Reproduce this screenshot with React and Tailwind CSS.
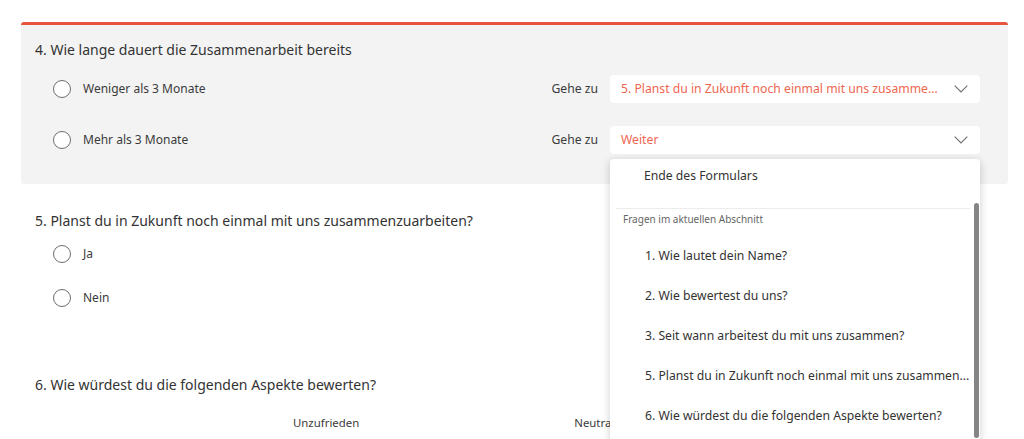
import React from "react";

const Chevron = () => (
  <svg width="14" height="8" viewBox="0 0 14 8" fill="none" className="shrink-0">
    <polyline points="0.7,0.7 7,7 13.3,0.7" stroke="#707070" strokeWidth="1.1" fill="none" />
  </svg>
);

const Radio = ({ label }) => (
  <div className="flex items-center">
    <div className="w-[18px] h-[18px] rounded-full border border-[#6e6e6e] bg-white ml-[18px]" />
    <span className="ml-[12px] text-[12px] text-[#3b3b3b]">{label}</span>
  </div>
);

const Select = ({ value }) => (
  <div className="flex items-center justify-between w-[370px] h-[28px] bg-white rounded-[4px] pl-[11px] pr-[12px]">
    <span className="text-[12.2px] text-[#ee6650] whitespace-nowrap mr-[14px]">{value}</span>
    <Chevron />
  </div>
);

const menuItems = [
  "1. Wie lautet dein Name?",
  "2. Wie bewertest du uns?",
  "3. Seit wann arbeitest du mit uns zusammen?",
  "5. Planst du in Zukunft noch einmal mit uns zusammen...",
  "6. Wie würdest du die folgenden Aspekte bewerten?",
];

export default function App() {
  return (
    <div
      className="w-[1024px] h-[439px] overflow-hidden bg-white relative"
      style={{ fontFamily: '"Noto Sans", "Open Sans", sans-serif' }}
    >
      <div className="pt-[22px] pl-[21px]">
        <div className="w-[987px] bg-[#f3f3f3] border-t-[3px] border-[#e8553e] rounded-[3px] pl-[14px] pr-[28px] pt-[14px] pb-[30px]">
          <div className="text-[14px] leading-[22px] text-[#333]">4. Wie lange dauert die Zusammenarbeit bereits</div>
          <div className="flex items-center justify-between mt-[14px]">
            <Radio label="Weniger als 3 Monate" />
            <div className="flex items-center">
              <span className="text-[12.2px] text-[#3b3b3b] mr-[12px]">Gehe zu</span>
              <Select value="5. Planst du in Zukunft noch einmal mit uns zusamme..." />
            </div>
          </div>
          <div className="flex items-center justify-between mt-[23px]">
            <Radio label="Mehr als 3 Monate" />
            <div className="flex items-center">
              <span className="text-[12.2px] text-[#3b3b3b] mr-[12px]">Gehe zu</span>
              <div className="relative">
                <Select value="Weiter" />
                <div className="absolute left-0 top-[33px] w-[370px] h-[282px] bg-white rounded-[4px] shadow-[0_2px_8px_rgba(0,0,0,0.2)] z-10 overflow-hidden">
                  <div className="pl-[34px] h-[33px] flex items-center text-[12.2px] text-[#333] pt-[1px]">Ende des Formulars</div>
                  <div className="mx-[6px] mt-[16px] w-[354px] h-px bg-[#ececec]" />
                  <div className="pl-[13px] mt-[3px] text-[10px] leading-[14px] text-[#666]">Fragen im aktuellen Abschnitt</div>
                  <div className="mt-[20px] flex flex-col gap-[20px]">
                    {menuItems.map((t) => (
                      <div key={t} className="pl-[35px] pr-[8px] text-[12.2px] leading-[20px] text-[#333] whitespace-nowrap">
                        {t}
                      </div>
                    ))}
                  </div>
                  <div className="absolute left-[364px] top-[44px] w-[5px] h-[235px] rounded-full bg-[#858585]" />
                </div>
              </div>
            </div>
          </div>
        </div>
      </div>

      <div className="pl-[35px] pt-[26px]">
        <div className="text-[14px] leading-[22px] text-[#333]">5. Planst du in Zukunft noch einmal mit uns zusammenzuarbeiten?</div>
        <div className="mt-[13px] flex flex-col gap-[26px]">
          <Radio label="Ja" />
          <Radio label="Nein" />
        </div>
        <div className="mt-[67px] text-[14px] leading-[22px] text-[#333]">6. Wie würdest du die folgenden Aspekte bewerten?</div>
        <div className="mt-[18px] flex text-[11.4px] text-[#3b3b3b]">
          <span className="ml-[258px]">Unzufrieden</span>
          <span className="ml-[215px]">Neutral</span>
        </div>
      </div>
    </div>
  );
}
